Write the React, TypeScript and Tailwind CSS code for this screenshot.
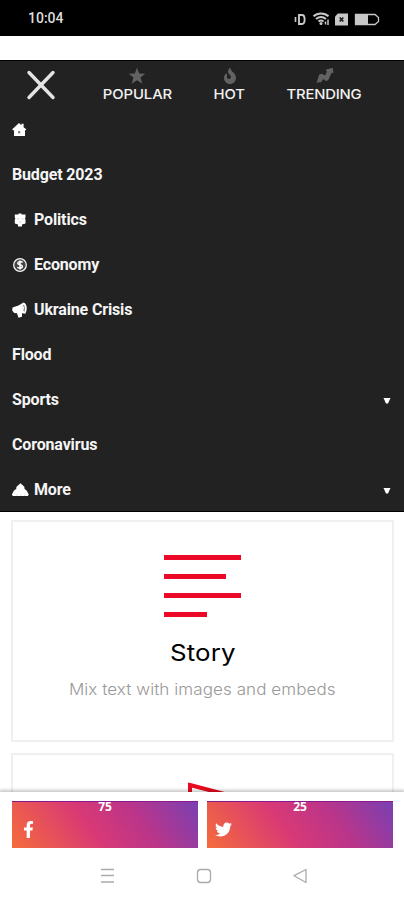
import React from "react";
import { FaFacebookF, FaTwitter, FaFire } from "react-icons/fa";

function HomeIcon() {
  return (
    <svg className="h-[15px] w-[15px]" viewBox="0 0 15 15" fill="#fff">
      <path d="M0 7.5 7 1l2.4 2.2V1.8h2.2v3.4L14.5 7.5 13 8.6V14H2V8.6Z" />
      <path d="M6.2 9h2v2.4h-2z" fill="#777" />
    </svg>
  );
}

function PoliticsIcon() {
  return (
    <svg className="h-[16px] w-[16px]" viewBox="0 0 16 16" fill="#fff">
      <path d="M6.500 1.500h3v1h4v3l-.6 1 .6 1v4l-3.500 1V14.500H6v-2L2.800 11.500v-4l.6-1-.6-1v-3h3.700Z" />
      <path d="M5 6.800h2M9.500 6.800h2M8 9v2" stroke="#bbb" strokeWidth="0.700" />
    </svg>
  );
}

function EconomyIcon() {
  return (
    <svg className="h-[16px] w-[16px]" viewBox="0 0 16 16" fill="none">
      <circle cx="8" cy="8" r="6.3" fill="#444" stroke="#f4f4f4" strokeWidth="1.3" />
      <path d="M10.600 5.400C9 4 5.600 4.400 5.800 6.400c.2 1.800 4.700 1.100 4.600 3.200C10.300 11.500 6.800 11.700 5.300 10.300M8 3.500V12.500" stroke="#fff" strokeWidth="1.500" />
    </svg>
  );
}

function HornIcon() {
  return (
    <svg className="h-[18px] w-[16px]" viewBox="0 0 16 18" fill="#fff">
      <path d="M.5 6.500 6.500 4.500 11.500 1.500C15 2.500 15.800 8.500 13.300 12.800L10 12.300V15.800L6.500 16.800 5 12.300 2.200 12 .2 9.500Z" />
      <path d="M11.300 3.500c1.900 1 2.500 5 1 7.500-1.600-1.500-2.200-5-1-7.500Z" fill="#999" />
      <path d="M11.400 5.500v3" stroke="#fff" />
    </svg>
  );
}

function MoreIcon() {
  return (
    <svg className="h-[16px] w-[17px]" viewBox="0 0 17 16" fill="#fff">
      <path d="M8.500 1.200 12.300 4.800l.3 2.200 2 1.500 2.200 4-1 1.500H.8l-1-1.500 2.200-4 2.200-1.500.3-2.200Z" />
      <path d="M5 12.500v1M9 12.500v1M12.500 12.500v1" stroke="#aaa" strokeWidth=".6" />
    </svg>
  );
}

function StarIcon() {
  return (
    <svg className="h-[18px] w-[18px]" viewBox="0 0 18 18" fill="#626262">
      <path d="m9 .5 2.100 6.100 6.100.2-4.700 3.800 1.900 6.200L9 13.300l-5.400 3.500 1.900-6.200L.8 6.800l6.100-.2Z" />
    </svg>
  );
}

function TrendingIcon() {
  return (
    <svg className="h-[18px] w-[20px]" viewBox="0 0 20 18" fill="#626262">
      <path d="m1.500 16 2.700-8.500 2.500-.7 3.500 1.800 1.700-4.100-1.400-1.700L17.800.7l.6 5.500-1.800-.4-3.400 7.500-2.200.7-3-2-1.700 3.200-2.400.1Z" />
    </svg>
  );
}

type Row = { label?: string; icon?: React.ReactNode; arrow?: boolean };

const rows: Row[] = [
  { icon: <HomeIcon /> },
  { label: "Budget 2023" },
  { label: "Politics", icon: <PoliticsIcon /> },
  { label: "Economy", icon: <EconomyIcon /> },
  { label: "Ukraine Crisis", icon: <HornIcon /> },
  { label: "Flood" },
  { label: "Sports", arrow: true },
  { label: "Coronavirus" },
  { label: "More", icon: <MoreIcon />, arrow: true },
];

function StatusBar() {
  return (
    <header className="flex h-[36px] shrink-0 items-center justify-between bg-black pl-[28px] pr-[24px] pt-px">
      <span className="font-['Roboto',sans-serif] text-[14px] font-medium text-[#ddd]">10:04</span>
      <svg className="h-[16px] w-[87px]" viewBox="293 10.500 87 16" fill="none" stroke="#c8c8c8">
        <path d="M299 14.500h3c3.500 0 3.500 9 0 9h-3Z" strokeWidth="1.900" />
        <path d="M295.500 16.500v5" strokeWidth="1.600" />
        <path d="M313.500 15.800c4-3.700 11-3.700 15 0M316 18.500c3-2.500 7-2.500 10 0M318.500 21c1.500-1.300 3.500-1.300 5 0" strokeWidth="2" />
        <circle cx="321" cy="23" r="1.500" fill="#c8c8c8" stroke="none" />
        <path d="M328 19v5.500M325.500 21v3" strokeWidth="1.500" />
        <path d="M338 13h10v12h-13v-9Z" fill="#c8c8c8" stroke="none" />
        <path d="m339.700 17 3.600 4m0-4-3.600 4" stroke="#222" strokeWidth="1.800" />
        <path d="M355.500 14H375l3.500 3v4l-3.500 3h-19.500Z" strokeWidth="1.300" />
        <path d="M355 14h13v10h-13Z" fill="#c8c8c8" stroke="none" />
      </svg>
    </header>
  );
}

function Tab({ icon, label, className }: { icon: React.ReactNode; label: string; className: string }) {
  return (
    <div className={`flex shrink-0 flex-col items-center text-[#626262] ${className}`}>
      <div className="flex h-[18px] items-center">{icon}</div>
      <span className="scale-x-[1.1] whitespace-nowrap text-[13.5px] font-medium leading-[19px] text-[#f2f2f2]">{label}</span>
    </div>
  );
}

function Menu() {
  return (
    <nav className="h-[452px] shrink-0 border-y border-black bg-[#222]">
      <div className="flex h-[46px] items-start pl-[26px] pt-[6px]">
        <svg className="mt-[3px] h-[30px] w-[30px] shrink-0" viewBox="0 0 30 30" stroke="#e4e4e4" strokeWidth="3.400" strokeLinecap="round">
          <path d="m3 2.500 24 25M27 2.500l-24 25" />
        </svg>
        <Tab icon={<StarIcon />} label="POPULAR" className="ml-[46px] w-[70px] tracking-[-0.1px]" />
        <Tab icon={<FaFire size={16} />} label="HOT" className="ml-[42px] w-[31px] tracking-[-0.1px]" />
        <Tab icon={<TrendingIcon />} label="TRENDING" className="ml-[42px] w-[75px] tracking-[-0.2px]" />
      </div>
      <ul className="font-['Roboto',sans-serif] text-[16px] font-bold tracking-[-0.15px] text-[#f5f5f5]">
        {rows.map((row, i) => (
          <li key={i} className="flex h-[45px] items-center pl-[12px] pr-[13px]">
            {row.icon && <span className="flex w-[22px] shrink-0">{row.icon}</span>}
            <span className="flex-1">{row.label}</span>
            {row.arrow && (
              <svg className="mt-[2px] h-[6px] w-[8px]" viewBox="0 0 8 6" fill="#fff">
                <path d="M.5 0h7L5 5.500H3Z" />
              </svg>
            )}
          </li>
        ))}
      </ul>
    </nav>
  );
}

function Share({ count, icon }: { count: string; icon: React.ReactNode }) {
  return (
    <div className="flex h-[47px] flex-1 flex-col border-t border-[#8c168c] bg-[linear-gradient(55deg,#f56c3b_0%,#d93975_42%,#ba358a_68%,#7940b2_100%)] text-white">
      <span className="h-[11px] text-center font-['Noto_Sans',sans-serif] text-[12px] font-bold leading-[9px]">{count}</span>
      <span className="flex h-[33px] items-center pl-[8px]">{icon}</span>
    </div>
  );
}

export default function App() {
  return (
    <div className="flex h-[900px] w-[404px] flex-col overflow-hidden bg-white font-['Inter',sans-serif]">
      <StatusBar />
      <div className="h-[24px] shrink-0 bg-white" />
      <Menu />
      <main className="flex h-[280px] shrink-0 flex-col gap-[11px] overflow-hidden pl-[11px] pr-[10px] pt-[8px]">
        <section className="flex h-[222px] shrink-0 flex-col items-center border-2 border-[#f0f0f0]">
          <svg className="mt-[33px] h-[64px] w-[77px]" viewBox="0 0 77 64" fill="#ec0928">
            <path d="M0 0h77v5H0zM0 19h62v5H0zM0 38h77v5H0zM0 57h43v5H0z" />
          </svg>
          <h2 className="mt-[19px] scale-x-[1.1] text-[23.5px] leading-[30px] tracking-[0.1px] text-black">Story</h2>
          <p className="mt-[12px] scale-x-[1.1] whitespace-nowrap text-[15.5px] font-light leading-[20px] tracking-[0.05px] text-[#999]">Mix text with images and embeds</p>
        </section>
        <section className="flex h-[220px] shrink-0 justify-center border-2 border-[#f0f0f0]">
          <svg className="mt-[27px] h-[72px] w-[74px]" viewBox="0 0 74 72" fill="none" stroke="#e80b20" strokeWidth="4">
            <path d="m24 3 46 12-46 40Z" transform="translate(0 0)" />
          </svg>
        </section>
      </main>
      <footer className="z-10 flex h-[108px] shrink-0 flex-col bg-white shadow-[0_-1px_3px_1px_rgba(0,0,0,0.22)]">
        <div className="flex gap-[9px] pl-[12px] pr-[11px] pt-[9px]">
          <Share count="75" icon={<FaFacebookF size={17} />} />
          <Share count="25" icon={<FaTwitter size={17} />} />
        </div>
        <svg className="h-[52px] w-[404px]" viewBox="0 848 404 52" fill="none" stroke="#aaa" strokeWidth="1.300">
          <path d="M101 869.500h13M101 875.500h13M101 882h13" />
          <rect x="197.500" y="869.500" width="13" height="13" rx="3" />
          <path d="m294 875.700 12-6.200v13Z" strokeLinejoin="round" />
        </svg>
      </footer>
    </div>
  );
}
